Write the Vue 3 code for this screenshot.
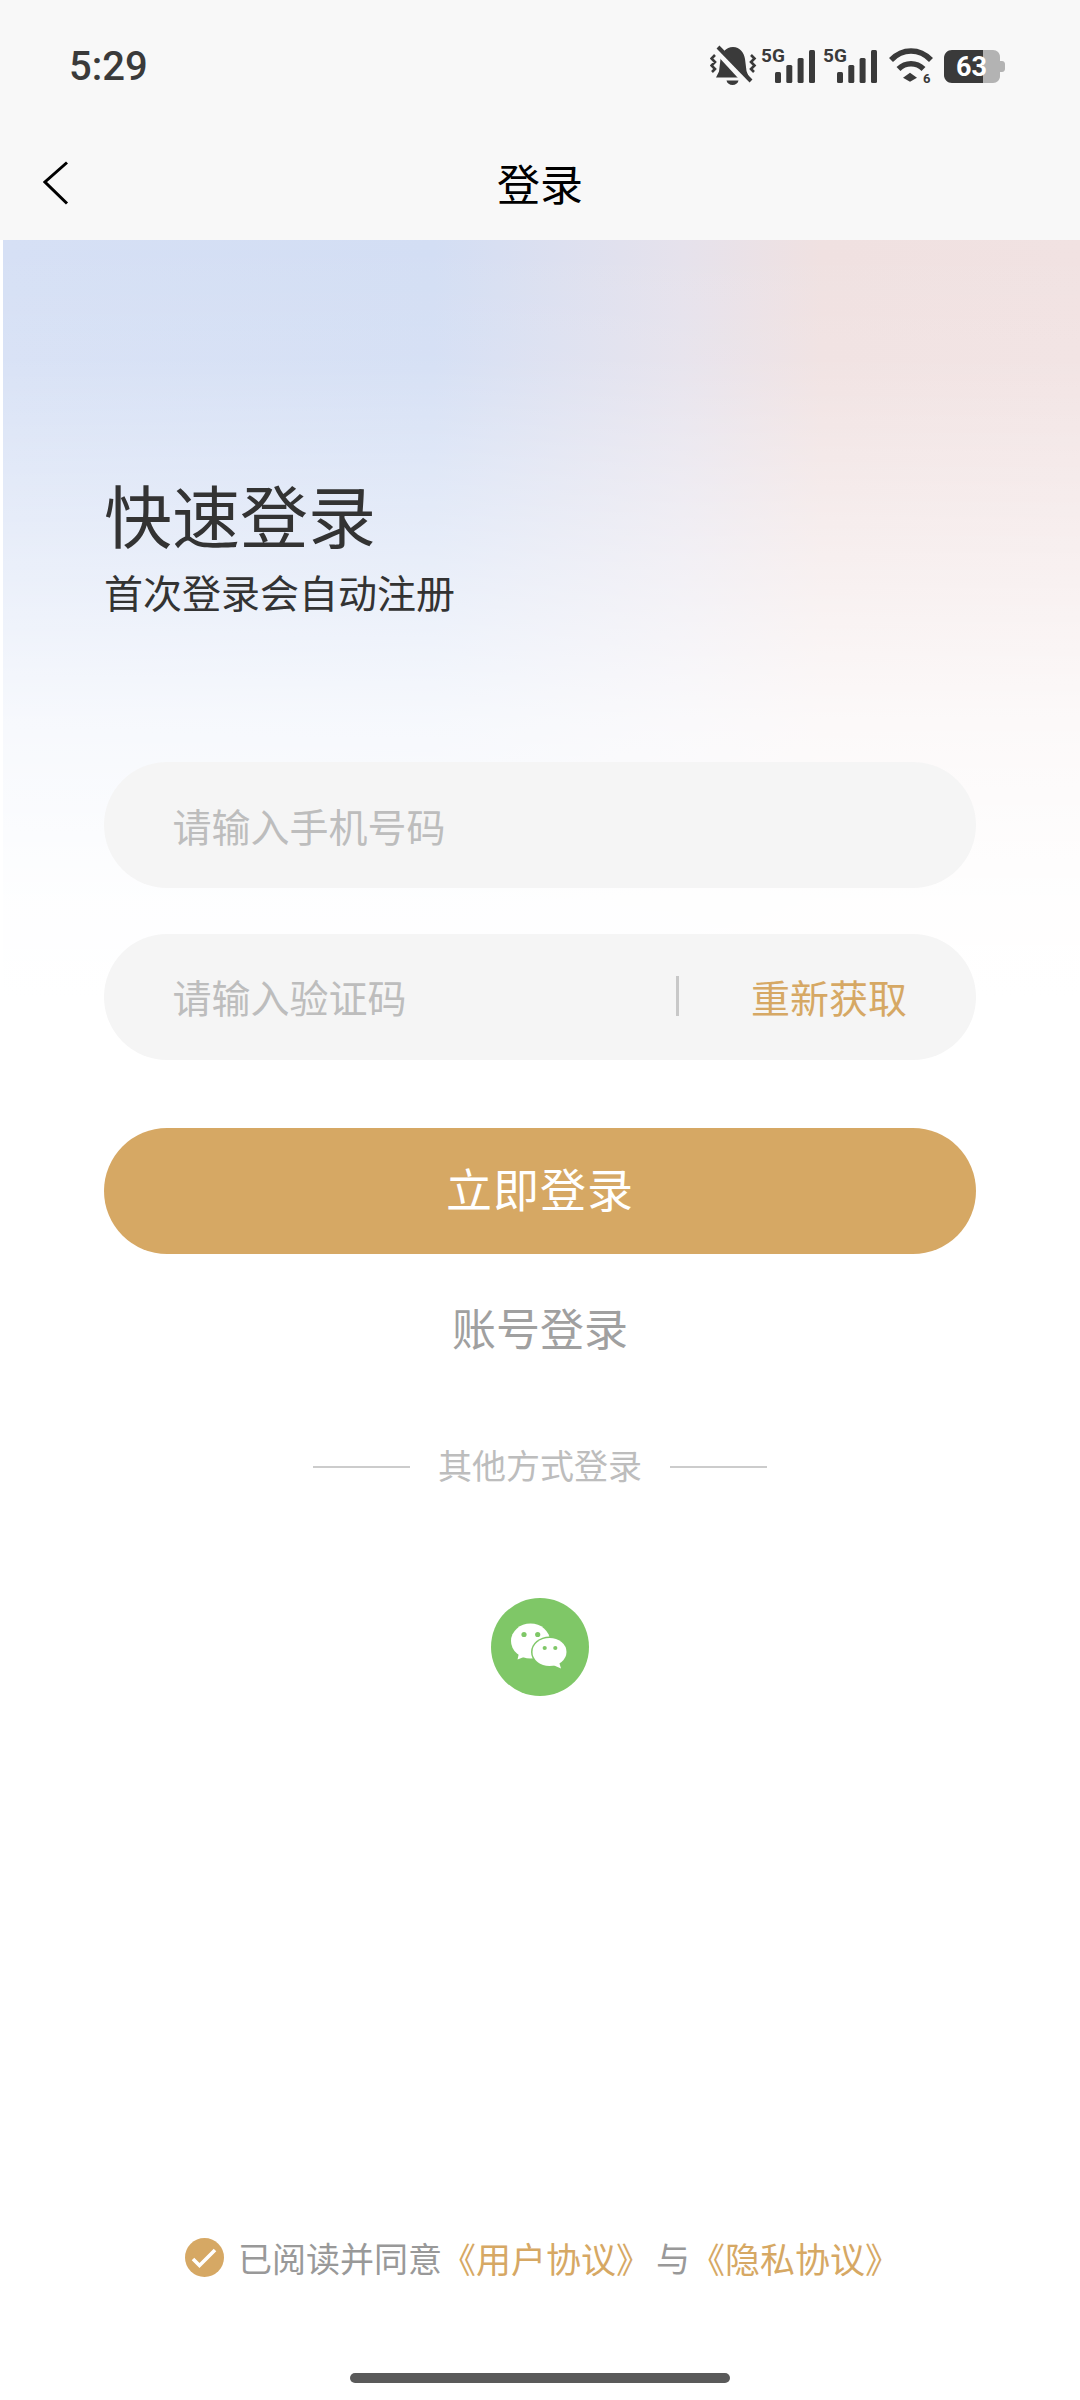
<script setup>
const bars = [
  { x: 775, y: 71, h: 11 },
  { x: 786.3, y: 64, h: 18 },
  { x: 797.6, y: 57, h: 25 },
  { x: 809, y: 49, h: 33 }
]
const bars2 = bars.map((b) => ({ ...b, x: b.x + 62 }))
</script>

<template>
  <div class="page">
    <header class="top">
      <div class="status">
        <span class="time">5:29</span>
        <svg class="status-icons" width="300" height="50" viewBox="710 40 300 50">
          <g fill="#3a3a3a">
            <path d="M733 46c7 0 11 6 12 12l1.500 12 2.500 6.500h-33l3-6 1.500-12.500c.8-6 5.500-12 12.500-12z" />
            <path d="M726.500 79.500h12c-.6 2.800-3 4.500-6 4.500s-5.400-1.700-6-4.500z" />
          </g>
          <path d="M714 45l35 38" stroke="#f8f8f8" stroke-width="8" fill="none" />
          <path d="M718 46l33 34" stroke="#3a3a3a" stroke-width="4" fill="none" />
          <path d="M715 54l-3.500 3.500 3.500 3.500-3.500 3.500 3.500 3.500-3 3M751 54l3.500 3.500-3.500 3.500 3.500 3.500-3.500 3.500 3 3" stroke="#3a3a3a" stroke-width="2.600" fill="none" />
          <text x="761" y="60.500" class="sig">5G</text>
          <text x="823" y="60.500" class="sig">5G</text>
          <rect v-for="b in bars" :key="b.x" :x="b.x" :y="b.y" width="6" :height="b.h" rx="1.500" fill="#3a3a3a" />
          <rect v-for="b in bars2" :key="b.x" :x="b.x" :y="b.y" width="6" :height="b.h" rx="1.500" fill="#3a3a3a" />
          <path d="M891 59c11.500-12 28.500-12 40 0" stroke="#3a3a3a" stroke-width="5.500" fill="none" />
          <path d="M898.500 68c7-7 18-7 25 0" stroke="#3a3a3a" stroke-width="5.500" fill="none" />
          <path d="M903 76.700l7-5 7 5-7 4z" fill="#3a3a3a" />
          <text x="923" y="82" class="wifi6">6</text>
          <path d="M983 49v33h10c4 0 7-3 7-7V56c0-4-3-7-7-7z" fill="#b3b3b3" />
          <path d="M1000 60h2c2 0 3 1.500 3 3v5c0 1.500-1 3-3 3h-2z" fill="#b3b3b3" />
          <path d="M983 49v33h-31c-4.500 0-8-3.500-8-8V57c0-4.500 3.500-8 8-8z" fill="#3a3a3a" />
          <text x="971.500" y="75" class="batt">63</text>
        </svg>
      </div>
      <nav class="nav">
        <svg class="back" width="26" height="44" viewBox="0 0 26 44">
          <path d="M24 1.500L2 21l22 21.500" stroke="#000" stroke-width="3" fill="none" />
        </svg>
        <span class="nav-title">登录</span>
      </nav>
    </header>

    <main class="main">
      <h1 class="title">快速登录</h1>
      <p class="sub">首次登录会自动注册</p>

      <div class="field field-first"><span class="ph">请输入手机号码</span></div>
      <div class="field field-second">
        <span class="ph">请输入验证码</span>
        <span class="code"><i class="sep"></i><span class="resend">重新获取</span></span>
      </div>

      <div class="submit">立即登录</div>
      <div class="account">账号登录</div>

      <div class="other">
        <i class="line"></i>
        <span class="other-text">其他方式登录</span>
        <i class="line"></i>
      </div>

      <svg class="wechat" width="98" height="98" viewBox="0 0 98 98">
        <circle cx="49" cy="49" r="49" fill="#7fc767" />
        <ellipse cx="39.500" cy="43" rx="19.500" ry="17.500" fill="#fff" />
        <path d="M28 55l-1.500 6.500 9-3.500z" fill="#fff" />
        <ellipse cx="58.500" cy="54" rx="18.500" ry="15.500" fill="#7fc767" />
        <ellipse cx="58.500" cy="54" rx="17" ry="14" fill="#fff" />
        <path d="M62 67l8 3.500-2-6.500z" fill="#fff" />
        <circle cx="33" cy="36.500" r="2.600" fill="#7fc767" />
        <circle cx="46.700" cy="36.500" r="2.600" fill="#7fc767" />
        <circle cx="53.700" cy="50" r="2.100" fill="#7fc767" />
        <circle cx="64.300" cy="50" r="2.100" fill="#7fc767" />
      </svg>

      <div class="agree">
        <svg class="check" width="39" height="39" viewBox="0 0 39 39">
          <circle cx="19.500" cy="19.500" r="19.500" fill="#d6a864" />
          <path d="M8 21l6.500 6.500L30 12" stroke="#fff" stroke-width="3.600" fill="none" />
        </svg>
        <span class="agree-text">已阅读并同意</span>
        <span class="link">《用户协议》</span>
        <span class="agree-text agree-and">与</span>
        <span class="link">《隐私协议》</span>
      </div>

      <div class="home"></div>
    </main>
  </div>
</template>

<style scoped>
.page {
  width: 1080px;
  height: 2400px;
  display: flex;
  flex-direction: column;
  background: #fff;
  font-family: "Noto Sans CJK SC", "Noto Sans", sans-serif;
  overflow: hidden;
}
.top {
  height: 240px;
  background: #f8f8f8;
  flex: none;
}
.status {
  height: 132px;
  box-sizing: border-box;
  padding: 0 70px 0 69px;
  display: flex;
  align-items: center;
  justify-content: space-between;
}
.time {
  font-family: Roboto, sans-serif;
  font-size: 40px;
  font-weight: 500;
  color: #3a3a3a;
}
.status-icons {
  display: block;
}
.sig {
  font-family: Roboto, sans-serif;
  font-size: 19px;
  font-weight: 700;
  fill: #3a3a3a;
}
.wifi6 {
  font-family: Roboto, sans-serif;
  font-size: 13px;
  font-weight: 700;
  fill: #3a3a3a;
}
.batt {
  font-family: Roboto, sans-serif;
  font-size: 27px;
  font-weight: 700;
  fill: #fff;
  text-anchor: middle;
}
.nav {
  height: 102px;
  display: flex;
  align-items: center;
  justify-content: center;
  position: relative;
}
.back {
  position: absolute;
  left: 43px;
  top: 29px;
}
.nav-title {
  font-size: 43px;
  line-height: 60px;
  margin-top: -3px;
  color: #000;
}
.main {
  flex: 1;
  display: flex;
  flex-direction: column;
  padding: 0 101px 0 104px;
  margin-left: 3px;
  background-image:
    linear-gradient(to bottom, rgba(255, 255, 255, 0) 0, rgba(255, 255, 255, 0.08) 120px, rgba(255, 255, 255, 0.44) 300px, rgba(255, 255, 255, 0.8) 480px, rgba(255, 255, 255, 0.97) 660px, #fff 760px),
    linear-gradient(to right, #d6e0f5 0, #d3def4 430px, #e6e2ec 680px, #f0e1e1 820px, #f1e2e2 1080px);
  background-size: 100% 800px;
  background-repeat: no-repeat;
}
.title {
  margin: 235px 0 0 -3px;
  font-size: 68px;
  line-height: 78px;
  font-weight: 400;
  color: #333;
}
.sub {
  margin: 13px 0 0 -3px;
  font-size: 39px;
  line-height: 50px;
  color: #333;
}
.field {
  height: 126px;
  width: 872px;
  margin-left: -3px;
  box-sizing: border-box;
  border-radius: 63px;
  background: #f5f5f5;
  padding: 0 69px 0 68.5px;
  display: flex;
  align-items: center;
  justify-content: space-between;
  flex: none;
}
.field-first {
  margin-top: 146px;
}
.field-second {
  margin-top: 46px;
  padding-bottom: 2px;
}
.ph {
  font-size: 39px;
  color: #bdbdbd;
}
.code {
  display: flex;
  align-items: center;
}
.sep {
  width: 3px;
  height: 40px;
  background: #c8c8c8;
  margin-right: 72px;
}
.resend {
  font-size: 39px;
  color: #d6a864;
}
.submit {
  height: 126px;
  width: 872px;
  margin: 68px 0 0 -3px;
  padding-bottom: 8px;
  box-sizing: border-box;
  border-radius: 63px;
  background: #d6a864;
  color: #fff;
  font-size: 46px;
  letter-spacing: 1px;
  display: flex;
  align-items: center;
  justify-content: center;
  flex: none;
}
.account {
  width: 872px;
  margin: 40px 0 0 -3px;
  font-size: 44px;
  line-height: 66px;
  color: #a0a0a0;
  text-align: center;
}
.other {
  width: 872px;
  margin: 79px 0 0 -3px;
  height: 56px;
  display: flex;
  align-items: center;
  justify-content: center;
  gap: 28px;
  font-size: 34px;
  color: #bdbdbd;
}
.other-text {
  margin-top: -6px;
}
.line {
  width: 97px;
  height: 2px;
  background: #ccc;
}
.wechat {
  display: block;
  flex: none;
  margin: 103px 0 0 384px;
}
.agree {
  margin: 542px 0 0 78px;
  display: flex;
  align-items: center;
  height: 39px;
  font-size: 34px;
  line-height: 39px;
  white-space: nowrap;
}
.check {
  flex: none;
  margin-right: 14px;
}
.agree-text {
  color: #999;
}
.agree-and {
  margin: 0 1px 0 5px;
}
.link {
  color: #d6a864;
  font-size: 35px;
  margin-left: -1px;
}
.home {
  width: 380px;
  height: 10px;
  margin: 96px 0 0 243px;
  border-radius: 5px;
  background: #5a5a5a;
  flex: none;
}
</style>
